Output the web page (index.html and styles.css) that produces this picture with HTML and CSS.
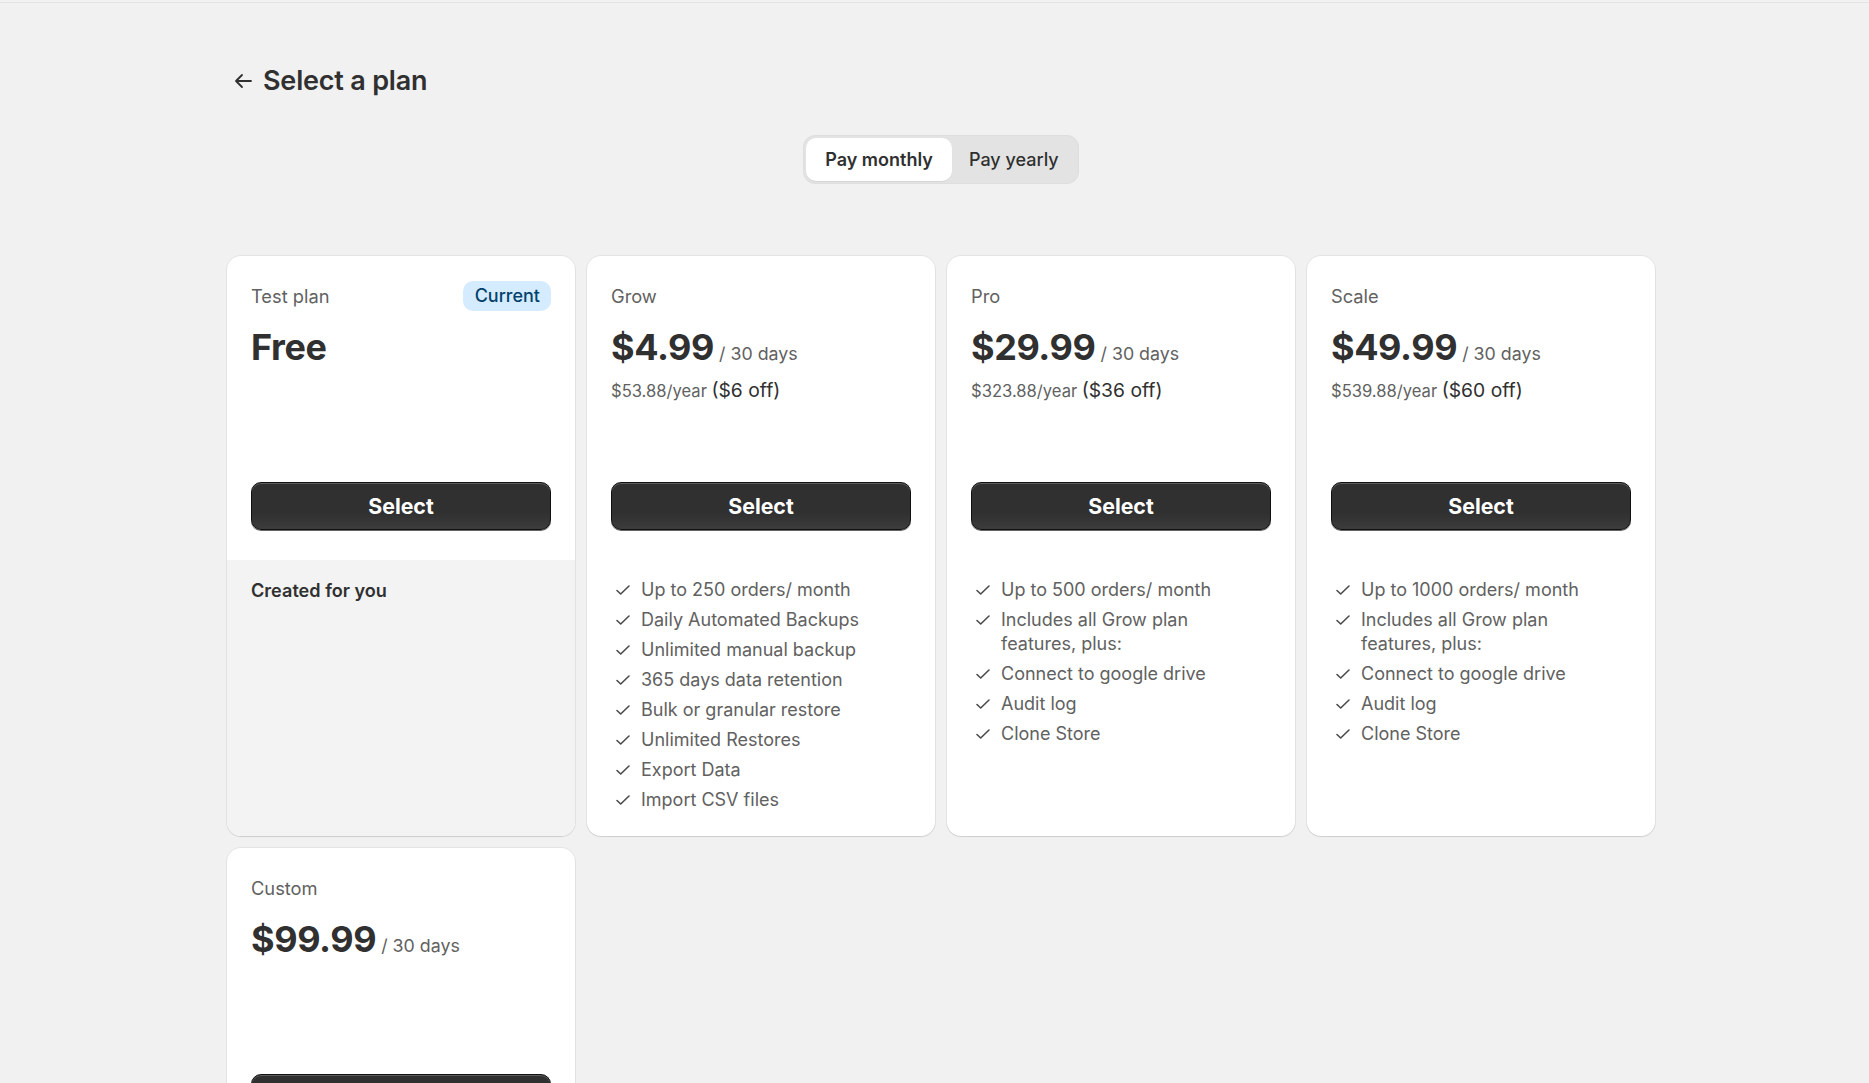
FILE: index.html
```html
<!DOCTYPE html>
<html lang="en">
<head>
<meta charset="utf-8">
<title>Select a plan</title>
<link rel="stylesheet" href="styles.css">
</head>
<body>
<div class="topline"></div>
<main class="page">
  <header class="page-header">
    <svg class="back" width="20" height="20" viewBox="0 0 20 20" aria-hidden="true"><path d="M18 10H3M9 4L3 10l6 6" fill="none" stroke="#303030" stroke-width="1.8" stroke-linecap="round" stroke-linejoin="round"/></svg>
    <h1 class="title">Select a plan</h1>
  </header>

  <div class="toggle-wrap">
    <div class="toggle">
      <span class="toggle-opt active">Pay monthly</span>
      <span class="toggle-opt">Pay yearly</span>
    </div>
  </div>

  <section class="grid">
    <article class="card">
      <div class="card-top">
        <div class="card-head">
          <div class="name-row"><span class="name">Test plan</span><span class="badge">Current</span></div>
          <div class="price-row"><span class="price">Free</span></div>
        </div>
        <button class="select">Select</button>
      </div>
      <div class="card-body gray">
        <p class="created">Created for you</p>
      </div>
    </article>

    <article class="card">
      <div class="card-top">
        <div class="card-head">
          <div class="name-row"><span class="name">Grow</span></div>
          <div class="price-row"><span class="price">$4.99</span><span class="per">/ 30 days</span></div>
          <div class="annual"><span class="year">$53.88/year</span> <span class="off">($6 off)</span></div>
        </div>
        <button class="select">Select</button>
      </div>
      <div class="card-body">
        <ul class="features">
          <li><svg class="check" width="16" height="16" viewBox="0 0 16 16"><path d="M2 8.5L5.7 12 14 4" /></svg><span>Up to 250 orders/ month</span></li>
          <li><svg class="check" width="16" height="16" viewBox="0 0 16 16"><path d="M2 8.5L5.7 12 14 4" /></svg><span>Daily Automated Backups</span></li>
          <li><svg class="check" width="16" height="16" viewBox="0 0 16 16"><path d="M2 8.5L5.7 12 14 4" /></svg><span>Unlimited manual backup</span></li>
          <li><svg class="check" width="16" height="16" viewBox="0 0 16 16"><path d="M2 8.5L5.7 12 14 4" /></svg><span>365 days data retention</span></li>
          <li><svg class="check" width="16" height="16" viewBox="0 0 16 16"><path d="M2 8.5L5.7 12 14 4" /></svg><span>Bulk or granular restore</span></li>
          <li><svg class="check" width="16" height="16" viewBox="0 0 16 16"><path d="M2 8.5L5.7 12 14 4" /></svg><span>Unlimited Restores</span></li>
          <li><svg class="check" width="16" height="16" viewBox="0 0 16 16"><path d="M2 8.5L5.7 12 14 4" /></svg><span>Export Data</span></li>
          <li><svg class="check" width="16" height="16" viewBox="0 0 16 16"><path d="M2 8.5L5.7 12 14 4" /></svg><span>Import CSV files</span></li>
        </ul>
      </div>
    </article>

    <article class="card">
      <div class="card-top">
        <div class="card-head">
          <div class="name-row"><span class="name">Pro</span></div>
          <div class="price-row"><span class="price">$29.99</span><span class="per">/ 30 days</span></div>
          <div class="annual"><span class="year">$323.88/year</span> <span class="off">($36 off)</span></div>
        </div>
        <button class="select">Select</button>
      </div>
      <div class="card-body">
        <ul class="features">
          <li><svg class="check" width="16" height="16" viewBox="0 0 16 16"><path d="M2 8.5L5.7 12 14 4" /></svg><span>Up to 500 orders/ month</span></li>
          <li><svg class="check" width="16" height="16" viewBox="0 0 16 16"><path d="M2 8.5L5.7 12 14 4" /></svg><span>Includes all Grow plan features, plus:</span></li>
          <li><svg class="check" width="16" height="16" viewBox="0 0 16 16"><path d="M2 8.5L5.7 12 14 4" /></svg><span>Connect to google drive</span></li>
          <li><svg class="check" width="16" height="16" viewBox="0 0 16 16"><path d="M2 8.5L5.7 12 14 4" /></svg><span>Audit log</span></li>
          <li><svg class="check" width="16" height="16" viewBox="0 0 16 16"><path d="M2 8.5L5.7 12 14 4" /></svg><span>Clone Store</span></li>
        </ul>
      </div>
    </article>

    <article class="card">
      <div class="card-top">
        <div class="card-head">
          <div class="name-row"><span class="name">Scale</span></div>
          <div class="price-row"><span class="price">$49.99</span><span class="per">/ 30 days</span></div>
          <div class="annual"><span class="year">$539.88/year</span> <span class="off">($60 off)</span></div>
        </div>
        <button class="select">Select</button>
      </div>
      <div class="card-body">
        <ul class="features">
          <li><svg class="check" width="16" height="16" viewBox="0 0 16 16"><path d="M2 8.5L5.7 12 14 4" /></svg><span>Up to 1000 orders/ month</span></li>
          <li><svg class="check" width="16" height="16" viewBox="0 0 16 16"><path d="M2 8.5L5.7 12 14 4" /></svg><span>Includes all Grow plan features, plus:</span></li>
          <li><svg class="check" width="16" height="16" viewBox="0 0 16 16"><path d="M2 8.5L5.7 12 14 4" /></svg><span>Connect to google drive</span></li>
          <li><svg class="check" width="16" height="16" viewBox="0 0 16 16"><path d="M2 8.5L5.7 12 14 4" /></svg><span>Audit log</span></li>
          <li><svg class="check" width="16" height="16" viewBox="0 0 16 16"><path d="M2 8.5L5.7 12 14 4" /></svg><span>Clone Store</span></li>
        </ul>
      </div>
    </article>

    <article class="card">
      <div class="card-top">
        <div class="card-head">
          <div class="name-row"><span class="name">Custom</span></div>
          <div class="price-row"><span class="price">$99.99</span><span class="per">/ 30 days</span></div>
        </div>
        <button class="select">Select</button>
      </div>
    </article>
  </section>
</main>
</body>
</html>
```
FILE: styles.css
```css
* { box-sizing: border-box; }
html, body { margin: 0; padding: 0; }
html { overflow: hidden; }
body {
  background: #f1f1f1;
  font-family: Inter, "Noto Sans", "Liberation Sans", sans-serif;
  color: #303030;
}
.topline {
  height: 1px;
  margin-top: 2px;
  background: #e4e4e4;
}
.page {
  width: 1428px;
  margin: 0 214px 0 227px;
}
.page-header {
  display: flex;
  align-items: center;
  height: 32px;
  margin-top: 62px;
  padding-left: 6px;
  gap: 10px;
}
.back { flex: none; }
.title {
  margin: 0;
  font-size: 27px;
  font-weight: 600;
  line-height: 32px;
  letter-spacing: -0.2px;
}
.toggle-wrap {
  display: flex;
  justify-content: center;
  margin-top: 38px;
}
.toggle {
  display: flex;
  height: 49px;
  padding: 2px;
  border: 1px solid #dedede;
  border-radius: 12px;
  background: #e3e3e3;
}
.toggle-opt {
  display: flex;
  align-items: center;
  padding: 0 17px;
  border-radius: 10px;
  font-size: 18px;
  font-weight: 450;
  color: #303030;
}
.toggle-opt.active {
  background: #fff;
  font-weight: 600;
  padding: 0 19px;
  box-shadow: 0 1px 1px rgba(0,0,0,0.06);
}
.grid {
  display: grid;
  grid-template-columns: repeat(4, 348px);
  gap: 12px;
  margin-top: 72px;
}
.card {
  display: flex;
  flex-direction: column;
  background: #fff;
  border-radius: 14px;
  overflow: hidden;
  box-shadow: 0 0 0 1px rgba(0,0,0,0.05), 0 1px 1px rgba(0,0,0,0.10);
}
.card-top {
  padding: 24px 24px 30px;
}
.card-head {
  min-height: 202px;
}
.name-row {
  display: flex;
  justify-content: space-between;
  align-items: center;
  height: 31px;
}
.name {
  font-size: 18.3px;
  color: #616161;
}
.badge {
  display: inline-flex;
  align-items: center;
  height: 30px;
  padding: 0 11px 0 12px;
  border-radius: 10px;
  background: #d5ebff;
  color: #00426b;
  font-size: 18px;
  font-weight: 500;
}
.price-row {
  display: flex;
  align-items: baseline;
  margin-top: 14px;
  line-height: 44px;
}
.price {
  font-size: 36px;
  font-weight: 700;
  letter-spacing: -0.4px;
}
.per {
  margin-left: 5px;
  font-size: 17.8px;
  color: #616161;
}
.annual {
  margin-top: 2px;
  line-height: 24px;
}
.year {
  font-size: 16.6px;
  color: #616161;
}
.off {
  font-size: 19.3px;
  color: #303030;
}
.select {
  display: block;
  width: 100%;
  height: 48px;
  border: 1.5px solid #111;
  border-radius: 10px;
  background: linear-gradient(#303030 65%, #3c3c3c);
  box-shadow: inset 0 1px 0 rgba(255,255,255,0.22), 0 1px 0 rgba(0,0,0,0.6);
  color: #fff;
  font-family: inherit;
  font-size: 21.3px;
  font-weight: 650;
  cursor: pointer;
}
.card-body {
  flex: 1;
  padding: 18px 24px 24px;
}
.card-body.gray {
  background: #f3f3f3;
}
.created {
  margin: 0;
  font-size: 18.1px;
  font-weight: 600;
  line-height: 24px;
  color: #303030;
}
.features {
  list-style: none;
  margin: 0;
  padding: 0;
  display: flex;
  flex-direction: column;
  gap: 6px;
}
.features li {
  display: flex;
  align-items: flex-start;
  gap: 10px;
  padding-left: 4px;
  font-size: 18px;
  line-height: 24px;
  color: #616161;
}
.check {
  flex: none;
  margin-top: 4px;
  fill: none;
  stroke: #4a4a4a;
  stroke-width: 1.6;
  stroke-linecap: round;
  stroke-linejoin: round;
}
.features li span { padding-right: 20px; }
```
